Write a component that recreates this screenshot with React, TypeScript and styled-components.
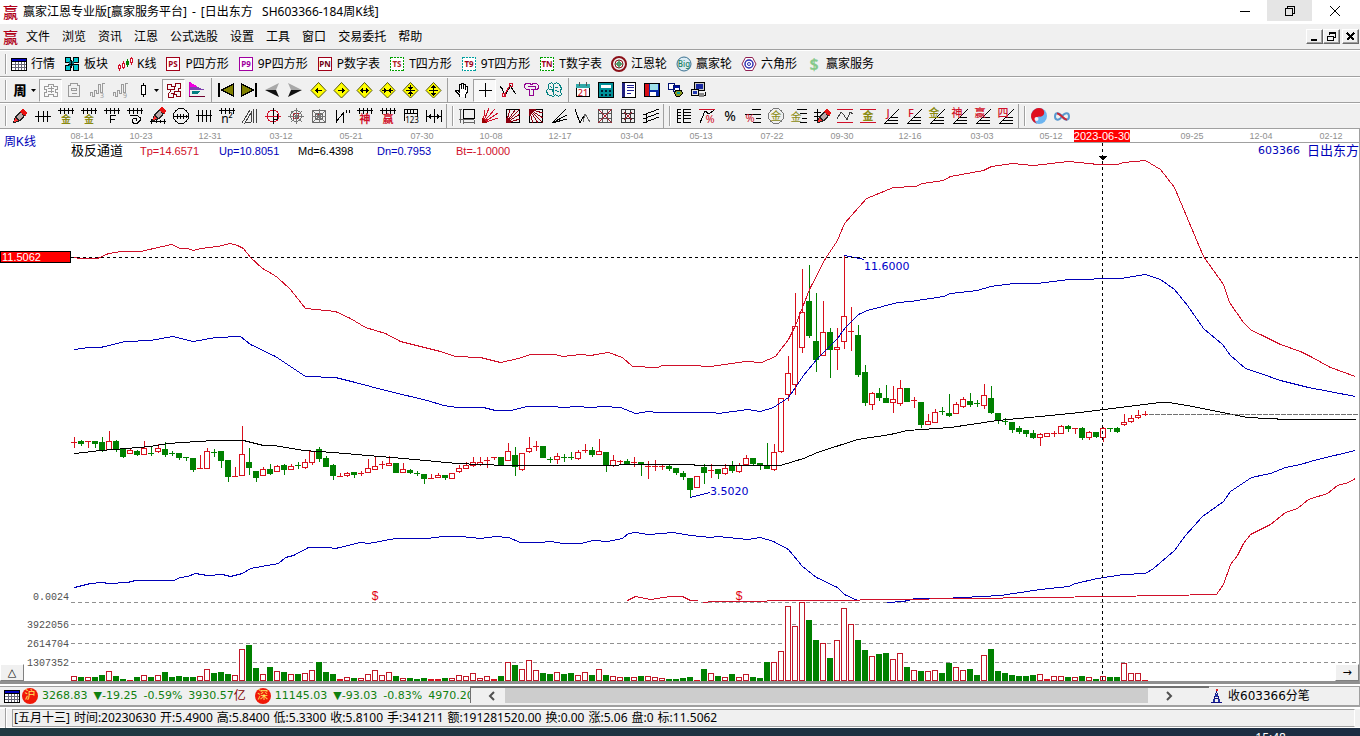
import React from 'react';
import styled, { createGlobalStyle } from 'styled-components';

const UI = '"Noto Sans", "Noto Sans CJK SC", sans-serif';
const WIDE = '"DejaVu Sans", "Noto Sans CJK SC", sans-serif';
const SLIM = '"Liberation Sans", "Noto Sans CJK SC", sans-serif';

const GlobalStyle = createGlobalStyle`
  * { box-sizing: border-box; }
  body { margin: 0; background: #fff; font: 12px/16px ${UI}; color: #000; }
  button { font: inherit; color: inherit; border: 0; padding: 0; background: none; }
`;

/* ---------- icon primitives ---------- */

type Shape = React.ReactElement;

const K = '#000';
const RED = '#d0102a';
const MAROON = '#8b0010';
const OLIVE = '#8a8a10';
const GRAY = '#9a9a9a';
const TEAL = '#008080';

const p = (d: string, stroke = K, fill = 'none', width = 1): Shape => (
  <path d={d} stroke={stroke} fill={fill} strokeWidth={width} />
);
const f = (d: string, fill = K): Shape => <path d={d} fill={fill} />;
const t = (text: string, x: number, y: number, size: number, fill = K, weight = 400): Shape => (
  <text x={x} y={y} fontSize={size} fill={fill} fontWeight={weight} textAnchor="middle" fontFamily={UI}>{text}</text>
);

const Drawing = styled.svg`
  flex: none;
  overflow: visible;
`;

const Glyph = ({ shapes, size = 18, smooth }: { shapes: Shape[]; size?: number; smooth?: boolean }) => (
  <Drawing width={size} height={size} viewBox={`0 0 ${size} ${size}`} shapeRendering={smooth ? 'auto' : 'crispEdges'} aria-hidden="true">
    {shapes.map((shape, i) => <React.Fragment key={i}>{shape}</React.Fragment>)}
  </Drawing>
);

const grille = 'M1 3.500h16M3.500 1v6M7.500 1v6M11.500 1v6M15.500 1v6';
const diamond = (arrow: string): Shape[] => [
  <path d="M9.500 1.500L17 9.500L9.500 17L2 9.500z" fill="#ffff00" stroke="#55550a" shapeRendering="auto" />, p(arrow),
];
const pencil = (dx: number, dy: number): Shape => (
  <g transform={`translate(${dx} ${dy})`}>
    {f('M0 14L2 7L8 1L13 5L9 11L5 13z', '#222')}
    {f('M7 2L10 0L14 3L13 7L10 6z', '#e81010')}
    {f('M4 8L8 3L10 7L6 11z', '#b9a9a9')}
    {f('M2 9L5 12L1 13z', '#ff3030')}
  </g>
);
const slopes = (mark: string, color: string): Shape[] => [
  p('M2 17L17 2M6 13.500H16M3 16.500H16M9 10.500H16'),
  t(mark, 6, 10, 11, color, 500),
];

/* ---------- icon sets ---------- */

const tableIcon = [
  f('M0 2h16v13H0z', '#000'), f('M1 3h14v2H1z', '#0000c0'), f('M1 6h14v8H1z', '#fff'),
  p('M1 8.500h14M1 11.500h14M4.500 6v8M7.500 6v8M10.500 6v8M13.500 6v8', '#667'),
];

const boxIcon = (label: string, color: string, text: string, dashed?: boolean) => [
  <rect x="1.500" y="1.500" width="13" height="13" fill="#fff" stroke={color} strokeDasharray={dashed ? '2 1' : undefined} />,
  t(label, 8, 11, 8, text, 700),
];

const modules: [string, Shape[], boolean?][] = [
  ['行情', tableIcon],
  ['板块', [
    f('M1 1h6v6H1zM9 1h6v5H9zM1 9h5v6H1zM9 8h6v7H9z', '#00c8d0'), p('M1.500 1.500h5v5h-5zM9.500 1.500h5v5h-5zM1.500 9.500h5v5h-5zM9.500 8.500h5v6h-5z'),
    f('M5 5h5v5H5z', '#006c78'), p('M7.500 4v8M4 8.500h8'),
  ]],
  ['K线', [
    p('M2.500 8v7M6.500 5v8M14.500 1v8', RED), p('M1.500 9.500h2v3h-2zM5.500 7.500h2v4h-2zM13.500 2.500h2v4h-2z', RED, '#fff'),
    p('M10.500 3v8M9.500 5.500h2v3h-2z', '#008000', '#008000'),
  ]],
  ['P四方形', boxIcon('PS', '#a00018', '#a00018')],
  ['9P四方形', boxIcon('P9', '#a000a0', '#a000a0')],
  ['P数字表', boxIcon('PN', '#a00018', '#700010')],
  ['T四方形', boxIcon('TS', '#00a000', '#b02020', true)],
  ['9T四方形', boxIcon('T9', '#00a0a0', '#a00018', true)],
  ['T数字表', boxIcon('TN', '#00a000', '#a00018', true)],
  ['江恩轮', [
    <circle cx="8" cy="8" r="7" fill="none" stroke="#8b1018" strokeWidth="2" />,
    <circle cx="8" cy="8" r="4" fill="#fff" stroke="#8b1018" />,
    <circle cx="8" cy="8" r="2" fill="none" stroke="#208040" />, p('M8 4v8M4 8h8', '#208040'),
  ], true],
  ['赢家轮', [
    <circle cx="8" cy="8" r="7" fill="#dcecf4" stroke="#3a7090" />, t('Big', 8, 11, 8, '#208060', 500),
  ], true],
  ['六角形', [
    p('M4.500 1.500h7L15 8l-3.500 6.500h-7L1 8z', '#902050', '#fff', 1), <circle cx="8" cy="8" r="4" fill="none" stroke="#3030b0" strokeWidth="1.500" />,
    <circle cx="8" cy="8" r="1.500" fill="none" stroke="#3030b0" />,
  ], true],
  ['赢家服务', [t('$', 8, 14, 16, '#86c98c', 700)], true],
];

const wave = (mark: string) => [p('M2.500 15v-4h2v4h2v-6h2v3h2V3h2v8h2V2h2', GRAY), t(mark, 14, 17, 7, GRAY)];
const knot = (c: string) => [p('M2.500 3.500h4v2h4v-3h5v5h-2v3h2v5h-4v-2h-3v3h-5v-4l2-2v-2h-3zM6 8.500h3v-3M9 13v-3h4M5.500 12.500h3', c)];

type Tool = { name: string; shapes: Shape[]; down?: boolean; drop?: boolean; smooth?: boolean };

const viewTools: (Tool | '|')[] = [
  { name: '周期', drop: true, smooth: true, shapes: [t('周', 9, 14, 13, K, 900)] },
  { name: '云图', down: true, shapes: [p('M2.500 5h4v-2h5v2h4v3h-2v3h2v4h-4v-2h-5v2h-4v-4h2v-3h-2zM6 7.500h6M6 10.500h6M9.500 5v7', GRAY)] },
  { name: '剪贴', shapes: [p('M3.500 4.500h2v-2h7v2h2v11h-11zM6.500 7.500h5v2h-5zM6.500 12.500h5', GRAY)] },
  { name: '三浪', shapes: wave('3') },
  { name: '九浪', shapes: wave('9') },
  { name: 'K线样式', drop: true, shapes: [p('M9.500 2v14'), p('M7.500 4.500h4v9h-4z', K, '#fff')] },
  { name: '缠绕', down: true, shapes: knot(MAROON) },
  { name: '旗形', shapes: [f('M2 1L10 6L2 7z', '#f000e0'), f('M2 6L10 6L17 9L2 9z', '#8040b0'), f('M4 10L12 10L9 13H4z', '#008080'), p('M1.500 1v15', '#d000c0'), p('M1 15.500h16', '#700030')] },
  '|',
  { name: '最前', shapes: [p('M2 2v14', K, 'none', 2), p('M4.500 9L16.500 3v12z', K, '#808000')] },
  { name: '最后', shapes: [p('M16 2v14', K, 'none', 2), p('M13.500 9L1.500 3v12z', K, '#808000')] },
  { name: '向左', smooth: true, shapes: [f('M2 9L16 2L13 9z', '#a8a8a8'), f('M2 9h11l3 7z', '#101010')] },
  { name: '向右', smooth: true, shapes: [f('M16 9L2 2L5 9z', '#a8a8a8'), f('M16 9H5L2 16z', '#101010')] },
  { name: '左移', shapes: diamond('M6 9.500h7M7.500 8v3M8.500 7v5') },
  { name: '右移', shapes: diamond('M6 9.500h7M11.500 8v3M10.500 7v5') },
  { name: '横向放大', shapes: diamond('M5 9.500h9M6.500 8v3M7.500 7v5M12.500 8v3M11.500 7v5') },
  { name: '横向缩小', shapes: diamond('M4 9.500h11M7.500 8v3M6.500 7v5M11.500 8v3M12.500 7v5') },
  { name: '纵向缩小', shapes: diamond('M9.500 4v11M5 9.500h9M8 7.500h3M7 6.500h5M8 11.500h3M7 12.500h5') },
  { name: '纵向放大', shapes: diamond('M9.500 4v11M5 9.500h9M8 5.500h3M7 6.500h5M8 13.500h3M7 12.500h5') },
  '|',
  { name: '手形', shapes: [p('M6.500 16v-2l-4-4v-1h2l2 2V3.500h1.500V8V2.500h2V8V3.500h2V9V5.500h2v6l-2 3v2', K, '#fff')] },
  { name: '十字光标', down: true, shapes: [p('M9.500 2v14M3 9.500h13')] },
  { name: '折点', shapes: [p('M1 5.500l2 2l3 7L11.500 5l5 8', K), p('M5 15L11 4', RED), p('M3.500 12.500h3v3h-3zM10.500 2.500h3v3h-3z', RED)] },
  { name: '组织', shapes: [p('M2.500 3.500l2-1h3l2 1l2-1h3l2 2v3l-2 1h-3v6h-4v-6h-3l-2-2zM6 5.500h7v3H9', '#900090')] },
  { name: '模型', shapes: [p('M3.500 3.500l3-2l2 2l3-2l3 2l2 4l-1 2l1 4l-3 2l-3-2l-2 2l-3-1l-3-1l-1-4l2-2zM8.500 3v11M4 8h3l1 3M10 6h3M10 9l4 2M5 5l2 2', TEAL)] },
  '|',
  { name: '日历', shapes: [p('M2.500 3.500h13v12h-13z', K, '#fff'), f('M2 3h14v4H2z', '#30a8a8'), p('M5.500 1v4M12.500 1v4', '#555'), t('21', 9, 15, 9, RED, 500)] },
  { name: '计算器', shapes: [p('M1.500 1.500h15v15h-15z', K, '#009098'), f('M4 4h10v3H4z', '#fff'), f('M4 9h2v2H4zM8 9h2v2H8zM12 9h2v2h-2zM4 13h2v2H4zM8 13h2v2H8zM12 13h2v2h-2z', '#001c30')] },
  { name: '笔记', shapes: [p('M2.500 1.500h13v15h-13z', K, '#fff'), f('M2 2h3v14H2z', '#202080'), p('M7 4.500h7M7 6.500h7M7 9.500h7M7 12.500h4', '#202090')] },
  { name: '保存', shapes: [p('M1.500 2.500h15v13h-15z', K, '#0828a8'), f('M2 3h4v12H2z', '#d81018'), f('M7 3h8v6H7z', '#9fe0e8'), f('M7 11h6v4H7z', '#fff')] },
  { name: '导出', shapes: [p('M2.500 2.500h6v6h-6zM7.500 4.500h6v6h-6z', '#001070', '#fff'), f('M8 5h5v2H8z', '#0010a0'), p('M9.500 9.500h6l1 3l-3 3h-3l-2-3z', K, '#8a9a20'), f('M11 11h3v2h-3z', '#00a0a0')] },
  { name: '联机', shapes: [p('M5.500 1.500h10v8h-10z', K, '#c8c8c8'), f('M7 3h7v5H7z', '#1828a0'), p('M2.500 8.500h7v6h-7z', K, '#e8e8e8'), f('M4 10h4v3H4z', '#2038b0'), p('M8 14.500h8v-4', K), f('M10 12h5v4h-5z', '#888')] },
];

const square = 'M2.500 2.500h13v13h-13z';
const drawTools: Tool[][] = [
  [
    { name: '画笔', shapes: [pencil(2, 2)] },
    { name: '平行竖线', shapes: [p('M1 9.500h16M4.500 4v11M9.500 4v11M13.500 4v11')] },
    { name: '金线一', shapes: [p(grille), t('金', 9, 16, 10, OLIVE, 700)] },
    { name: '金线二', shapes: [p(grille), t('金', 9, 16, 10, OLIVE, 700)] },
    { name: 'F线', shapes: [p(grille), p('M7.500 8v8M7 8.500h6M7 12.500h5')] },
    { name: '螺旋', shapes: [p(grille), p('M4 8.500h7l3 2v3l-3 3H8l-2-2v-2l2-1h2v2')] },
    { name: '标尺笔', shapes: [pencil(3, 0), p('M1 14.500h16M2.500 12v5M7.500 13v3M11.500 13v3M15.500 12v5')] },
    { name: '圆周', shapes: [<circle cx="9" cy="9" r="7.500" fill="none" stroke={K} />, p('M1 9.500h16M5.500 7v5M8.500 7v5M11.500 7v5M14.500 8v3')] },
    { name: '竖线组', shapes: [p('M1 8.500h16M3.500 3v12M7.500 3v12M11.500 3v12M15.500 3v12')] },
    { name: '平方', shapes: [p(grille), t('n²', 9, 16, 12)] },
    { name: '斜线角', shapes: [p('M1 16L9 3M4 16L10 6v9zM12.500 2v14M15.500 2v14', '#444')] },
    { name: '红十字圆', shapes: [<circle cx="9" cy="9" r="6" fill="none" stroke={RED} />, p('M9.500 1v16', K), p('M1 9.500h16', RED), p('M9 12h4v-5', K)] },
    { name: '圆网', shapes: [<circle cx="9" cy="9" r="5.500" fill="none" stroke="#777" />, <circle cx="9" cy="9" r="3" fill="none" stroke="#b02030" />, p('M9.500 1v16M1 9.500h16M4 4l11 11M4 15L15 4', '#777')] },
    { name: '方网', shapes: [p('M2.500 3.500h13v12h-13zM5.500 6.500h7v6h-7z', '#666'), p('M7.500 7.500h3v3h-3z', '#b02030'), p('M2 3l14 13M2 16L16 3M9.500 2v14M2 9.500h14', '#777')] },
    { name: '折线', shapes: [p('M3.500 3v13M3 15L11 5M10.500 5v11M13.500 3v3M16.500 3v3')] },
    { name: '神线', shapes: [p(grille), t('神', 9, 16, 11, RED, 700)] },
    { name: '赢线', shapes: [p(grille), t('赢', 9, 16, 11, RED, 700)] },
    { name: '数字线', shapes: [p('M2 2.500h14M2.500 2v12M15.500 2v8M2 6.500h14M5.500 2v5M8.500 2v5M11.500 2v5'), t('123', 10, 16, 8)] },
    { name: '间距', shapes: [p('M1.500 3v12M16.500 3v12M9.500 2v14M2 9.500h14M4.500 8v3M5.500 7v5M13.500 8v3M12.500 7v5')] },
  ],
  [
    { name: '方框测量', shapes: [p('M5.500 2.500h11v9h-11z'), p('M2.500 2v14M1 2.500h3M1 12.500h15M5.500 13v4M16.500 13v4M5 15.500h12', '#666')] },
    { name: '扇形线', shapes: [p('M2 16L8 1M2 16L14 2M2 16L17 6M2 16L17 11M2 16L4 3', RED), f('M1 11l5 5H1z', '#900')] },
    { name: '方扇形', shapes: [p(square), p('M2 16L6 3M2 16L11 3M2 16L16 2M2 16L16 7M2 16L16 12', MAROON), f('M2 11l5 5H2z', MAROON)] },
    { name: '反扇形', shapes: [p(square), p('M2 2L16 6M2 2L16 11M2 2L16 16M2 2L11 16M2 2L6 16', MAROON), f('M2 2h7L2 10z', MAROON)] },
    { name: '角度线', shapes: [p('M2 16L16 2M2 16L17 8M2 16L17 12')] },
    { name: '波谷', shapes: [p('M2 2L7 16L12 7'), p('M10 15L12 7L17 15', '#666')] },
    { name: '方格一', shapes: [p('M2.500 2.500h13v13h-13zM6.500 2v14M11.500 2v14M2 6.500h14M2 11.500h14', '#555'), p('M2 2l14 14M2 16L16 2', '#b02030')] },
    { name: '方格二', shapes: [p('M2.500 2.500h13v13h-13zM6.500 2v14M11.500 2v14M2 6.500h14M2 11.500h14', '#333'), p('M5 5l8 8M5 13l8-8', '#b02030')] },
    { name: '平行斜线', shapes: [p('M1 8L17 2M1 12L17 6M1 16L17 10M4.500 7v9')] },
  ],
  [
    { name: '刻度表', shapes: [p('M2.500 2v14M8.500 2v14M2 2.500h4M2 5.500h4M2 8.500h4M2 11.500h4M2 15.500h4M8 2.500h8M8 5.500h8M8 8.500h8M8 11.500h8M8 15.500h8')] },
    { name: '百分比折线', shapes: [p('M1 2.500h16', RED), p('M2 16L7 4l4 3l5-4'), t('%', 12, 16, 11, RED)] },
    { name: '百分比', smooth: true, shapes: [t('%', 9, 14, 14)] },
    { name: '百分比线', shapes: [p('M8 2.500h9M1 7.500h16M12 11.500h5M9 15.500h8'), t('%', 6, 15, 11, RED)] },
    { name: '金圆', shapes: [<circle cx="9" cy="9" r="7.500" fill="none" stroke="#777" />, t('金', 9, 13, 11, OLIVE)] },
    { name: '金分线', shapes: [p('M7 2.500h10M10 6.500h7M12 11.500h5M10 15.500h7'), t('金', 6, 14, 11, OLIVE)] },
    { name: '刻度笔', shapes: [p('M4.500 2v14M1 5.500h7M1 9.500h7M1 13.500h7'), pencil(4, 2)] },
    { name: '波浪', shapes: [p('M1 2.500h16M1 15.500h16', RED), p('M1 12L5 5l3 3l3 5l3-8l3 2', '#444')] },
    { name: '金通道', shapes: [p('M1 2.500h16M1 15.500h16', RED), t('金', 9, 13, 11, OLIVE, 700)] },
    { name: 'J斜线', shapes: slopes('J', RED) },
    { name: 'F斜线', shapes: slopes('F', RED) },
    { name: '金斜线', shapes: slopes('金', OLIVE) },
    { name: '神斜线', shapes: slopes('神', RED) },
    { name: '赢斜线', shapes: slopes('赢', RED) },
    { name: '四斜线', shapes: slopes('四', RED) },
  ],
  [
    { name: '太极', smooth: true, shapes: [
      <circle cx="9" cy="9" r="8" fill="#6cb4f0" />, f('M11 1.300A8 8 0 1 0 7 16.800A4 4 0 0 1 9 9.500A4 4 0 0 0 11 1.300z', '#e01020'),
      <circle cx="11" cy="6" r="2.500" fill="#e01020" />, <circle cx="6.500" cy="12" r="2" fill="#f4f0f8" />,
    ] },
    { name: '无穷', smooth: true, shapes: [p('M9 9.500C6 5 2 5.500 2 9.500S6 14 9 9.500', '#5a9ad0', 'none', 2), p('M9 9.500C12 5 16 5.500 16 9.500S12 14 9 9.500', '#5a9ad0', 'none', 2), p('M4 6.500C7 6 11 13 14 12.500', '#c82838', 'none', 2)] },
  ],
];

/* ---------- shell ---------- */

const Page = styled.div`
  display: flex;
  flex-direction: column;
  background: #f0f0f0;
`;

const TitleBar = styled.header`
  display: flex;
  align-items: center;
  height: 24px;
  background: #fff;
  padding: 0 3px;
`;

const Title = styled.h1`
  display: flex;
  gap: 5px;
  margin: 0;
  padding-left: 4px;
  flex: 1;
  font-size: 12px;
  font-weight: 400;
  white-space: pre;
`;

const Logo = styled.span`
  width: 16px;
  color: #b00018;
  font-size: 15px;
  font-weight: 500;
`;

const WindowButton = styled.button<{ $hot?: boolean }>`
  align-self: flex-start;
  width: 45px;
  height: 21px;
  display: grid;
  place-items: center;
  background: ${(q) => (q.$hot ? '#e5e5e5' : 'transparent')};
`;

const MenuBar = styled.nav`
  display: flex;
  align-items: center;
  height: 26px;
  padding: 0 1px 0 3px;
  border-bottom: 1px solid #a0a0a0;
`;

const MenuItem = styled.button`
  padding: 0 6px;
  white-space: nowrap;
`;

const MenuList = styled.div`
  display: flex;
  flex: 1;
  margin-left: 1px;
`;

const ChildButton = styled.button<{ $apart?: boolean }>`
  width: 17px;
  height: 15px;
  margin-left: ${(q) => (q.$apart ? 2 : 0)}px;
  display: grid;
  place-items: center;
  border: 1px solid;
  border-color: #fff #696969 #696969 #fff;
  box-shadow: inset -1px -1px #a0a0a0;
`;

const Bar = styled.div<{ $tall?: boolean }>`
  display: flex;
  height: ${(q) => (q.$tall ? 27 : 26)}px;
  border-top: 1px solid #fff;
  border-bottom: 1px solid #a0a0a0;
`;

const Group = styled.div<{ $open?: boolean }>`
  display: flex;
  align-items: center;
  padding: 0 1px 0 5px;
  border-right: 1px solid ${(q) => (q.$open ? 'transparent' : '#a0a0a0')};
`;

const Grip = styled.span`
  flex: none;
  width: 2px;
  height: 20px;
  margin-right: 1px;
  border-left: 1px solid #a0a0a0;
  border-right: 1px solid #fff;
`;

const Divider = styled.span`
  width: 6px;
  height: 24px;
  display: flex;
  justify-content: center;
  &::before { content: ''; width: 1px; background: #a0a0a0; }
`;

const ModuleButton = styled.button`
  display: flex;
  align-items: center;
  gap: 4px;
  margin-right: 9px;
  white-space: nowrap;
`;

const Modules = styled.div`
  display: flex;
  padding-left: 3px;
`;

const ToolButton = styled.button<{ $down?: boolean; $drop?: boolean }>`
  display: flex;
  align-items: center;
  justify-content: center;
  gap: 2px;
  width: ${(q) => (q.$drop ? 31 : 23)}px;
  height: 23px;
  border: 1px solid transparent;
  ${(q) => q.$down && 'border-color: #a0a0a0 #fff #fff #a0a0a0; background: #f8f8f8;'}
`;

const ToolView = ({ tool }: { tool: Tool }) => (
  <ToolButton $down={tool.down} $drop={tool.drop} aria-label={tool.name} aria-pressed={tool.down}>
    <Glyph shapes={tool.shapes} smooth={tool.smooth} />
    {tool.drop && <svg width="5" height="3" viewBox="0 0 5 3" aria-hidden="true"><path d="M0 0h5L2.500 3z" /></svg>}
  </ToolButton>
);

/* ---------- chart data ---------- */

// One entry per week: up/down, high, body top, body bottom, low, volume top.
const weeks = `r437,442,442,448,676 g440,441,443,445,677 r441,441,442,448,677 g441,441,443,447,677 g437,442,449,451,675
r431,441,449,449,671 g440,441,448,451,676 g448,448,456,457,679 r449,450,453,454,680 g450,451,454,455,677
r441,448,454,454,675 g447,453,454,455,677 r444,448,451,453,675 g442,449,454,456,672 g451,453,454,455,677
g453,453,457,459,676 g457,457,458,460,677 g458,458,469,471,677 r455,468,469,469,676 r448,451,468,469,669
g449,452,453,456,673 g451,451,460,467,672 g460,460,476,481,674 r467,476,477,477,675 r426,454,475,476,649
g448,462,467,474,645 g471,471,477,481,668 r467,469,475,476,674 g464,469,473,474,667 r465,466,471,472,671
g464,465,469,474,672 r464,466,469,470,674 g462,465,466,468,674 r459,462,467,469,673 r451,451,462,465,670
g447,449,458,461,662 g456,458,466,466,672 g464,465,475,479,674 r473,476,477,477,679 r472,473,475,477,677
g472,472,474,477,678 r471,473,474,476,678 r459,468,472,473,674 r456,466,469,470,670 r461,464,465,469,675
r456,463,465,466,672 g463,463,472,472,676 r463,469,472,473,678 g469,470,472,473,678 g471,473,474,475,679
g474,474,478,483,678 r474,478,479,479,679 r473,475,477,478,679 g475,475,477,479,678 r473,473,478,478,678
r465,468,471,473,675 r462,465,468,469,676 r457,462,465,467,673 r457,462,464,466,678 r457,460,461,468,676
r457,457,458,460,679 g457,457,465,465,676 r443,451,460,461,662 g447,455,466,475,665 r453,453,469,471,669
r437,448,451,453,660 r441,446,447,451,670 g446,446,457,457,673 g457,459,460,462,674 r453,456,459,464,672
g454,457,458,461,674 g452,457,458,459,673 r450,452,458,460,675 r444,450,451,453,672 g447,450,454,456,675
r439,451,454,455,669 g452,452,465,471,675 r455,460,465,467,676 r460,461,462,464,677 g459,461,463,464,677
r457,462,463,467,677 g462,462,464,475,676 r461,466,467,479,676 r460,466,467,471,677 r465,466,467,470,678
g465,466,468,470,679 g468,468,472,474,679 g471,473,476,479,678 g478,478,489,497,677 r476,476,487,488,680
g464,467,472,483,669 r464,470,471,478,673 g469,469,473,478,676 r464,468,473,475,677 g461,465,470,472,674
r463,465,471,473,677 r455,458,464,464,674 g458,458,463,464,677 g463,463,465,469,678 g443,466,468,468,662
r444,452,469,471,662 r398,398,451,453,651 r356,373,394,401,606 r293,326,384,395,626 r269,312,347,353,602
g265,301,335,337,620 g293,341,359,371,640 r301,332,355,356,643 g328,332,349,377,658 r328,347,349,370,640
r255,316,341,349,608 r307,331,332,351,624 g325,335,374,376,640 g365,372,402,405,650 r392,393,404,410,656
g388,393,397,400,654 g385,398,402,402,653 r386,399,402,413,659 r380,388,403,406,653 g388,388,401,401,667
r397,400,401,408,670 g402,402,424,427,671 r414,421,424,424,671 r409,412,422,422,670 g407,411,412,414,673
g394,413,415,416,663 r402,404,413,413,667 r397,399,406,408,670 g393,401,404,406,669 g400,403,404,406,675
r384,395,405,409,655 g386,398,412,413,649 g413,413,420,423,671 g418,421,422,424,673 g422,422,429,432,675
g426,428,431,433,676 g430,430,433,436,676 g430,433,437,438,675 r433,434,437,446,674 r433,433,436,437,679
r431,433,434,437,676 r425,426,433,433,676 g425,426,428,431,677 r428,428,429,434,677 g427,428,437,439,676
r431,432,437,440,677 g432,432,436,437,679 r427,428,437,442,676 g428,428,429,431,677 g427,428,431,432,677
r414,422,424,426,663 r415,418,421,423,673 r410,415,417,419,673 r411,414,415,416,680`
  .split(/\s+/)
  .map((w) => ({ up: w[0] === 'r', v: w.slice(1).split(',').map(Number) }));

const CHART_FLOOR = 681;
const paths = { upWick: '', upBox: '', upVolume: '', downFill: '' };
weeks.forEach(({ up, v: [high, top, bottom, low, volume] }, i) => {
  const x = 74 + 7 * i;
  const flat = bottom - top <= 1;
  if (up) {
    paths.upWick += flat ? `M${x} ${high}h1V${low}h-1z` : `M${x} ${high}h1V${top}h-1zM${x} ${bottom}h1V${low}h-1z`;
    if (flat) paths.upWick += `M${x - 3} ${top}h6v1h-6z`;
    else paths.upBox += `M${x - 2.5} ${top + 0.5}h5V${bottom + 0.5}h-5z`;
    if (volume >= 679) paths.upWick += `M${x - 3} ${volume}h6V${CHART_FLOOR}h-6z`;
    else paths.upVolume += `M${x - 2.5} ${volume + 0.5}h5V${CHART_FLOOR - 0.5}h-5z`;
  } else {
    paths.downFill += `M${x} ${high}h1V${low + 1}h-1zM${x - 3} ${top}h6V${bottom + 1 - (flat ? 1 : 0)}h-6zM${x - 3} ${volume}h6V${CHART_FLOOR}h-6z`;
  }
});

const curves: [string, string][] = [
  [RED, '74,257 80,258 97,258 108,253 121,251 140,251 171,244 180,248 187,248 193,250 200,248 217,246 230,243 237,245 243,248 250,257 262,268 271,273 277,277 290,289 305,308 335,311 350,318 365,327 385,333 400,341 420,346 440,351 455,356 480,357 500,362 518,358 530,354 555,354 562,356 580,354 590,355 608,352 622,357 632,366 657,367 662,365 690,365 710,366 745,361 761,362 775,356 788,339 795,325 809,289 825,258 837,240 844,223 866,198 893,187 915,186 922,183 943,180 950,176 983,170 991,166 1012,163 1033,165 1068,161 1098,164 1117,164 1123,162 1145,160 1160,169 1174,187 1203,256 1223,284 1229,302 1243,322 1251,330 1260,334 1280,344 1300,351 1310,356 1330,367 1355,376'],
  ['#0000b8', '74,349 88,347 100,347 125,341 150,340 172,336 193,341 215,337 240,336 250,344 275,356 305,376 335,377 355,382 385,390 410,396 427,400 443,405 457,407 483,407 495,410 510,410 527,406 553,406 562,407 577,406 590,407 603,406 620,407 635,413 648,411 657,412 713,412 718,413 747,409 760,411 773,407 788,397 795,387 803,375 817,358 837,338 845,327 858,314 867,310 897,302 910,301 943,296 950,293 977,290 990,286 1013,283 1037,283 1068,279 1120,278 1145,274 1160,279 1174,289 1187,305 1203,328 1222,344 1230,355 1245,368 1260,373 1280,380 1308,387 1355,396'],
  ['#000', '74,453 83,452 100,450 113,449 150,446 167,443 213,440 243,440 263,445 273,445 303,450 333,452 367,455 403,458 457,463 480,464 507,465 617,465 620,464 693,464 695,465 780,465 803,458 817,452 857,439 890,434 907,430 950,427 997,420 1050,415 1080,412 1103,409 1120,407 1160,402 1168,402 1187,405 1227,413 1247,417 1287,419 1355,419'],
  ['#0000b8', '74,587 90,583 102,582 108,583 127,582 135,580 173,580 180,577 187,576 195,573 207,575 222,574 230,576 242,573 250,568 278,563 285,557 293,555 308,547 327,547 335,548 360,542 368,543 395,538 427,538 443,536 460,536 480,538 495,536 508,537 520,542 540,542 550,541 563,543 580,543 593,540 607,541 622,538 628,533 635,532 648,534 673,532 690,535 710,537 718,536 747,539 760,537 773,541 788,549 802,566 816,577 837,587 844,594 857,600'],
  ['#0000b8', '887,602 903,601 915,598 943,598 1000,595 1040,589 1068,586 1075,583 1097,578 1123,574 1145,573 1153,568 1174,550 1185,535 1202,516 1223,501 1230,491 1251,477 1270,473 1285,467 1300,464 1317,459 1355,450'],
  [RED, '627,600 635,596 650,599 670,596 682,596 690,600 697,600'],
  [RED, '703,602 713,601 753,601 780,600 827,600 893,599 1040,597 1110,596 1216,594 1223,584 1230,564 1237,555 1243,543 1250,534 1270,524 1285,512 1297,508 1308,499 1327,493 1337,485 1348,482 1355,478'],
];

const dates: [number, string][] = [
  [82, '08-14'], [141, '10-23'], [210, '12-31'], [281, '03-12'], [351, '05-21'], [422, '07-30'], [491, '10-08'], [560, '12-17'],
  [632, '03-04'], [701, '05-13'], [772, '07-22'], [842, '09-30'], [910, '12-16'], [982, '03-03'], [1051, '05-12'], [1192, '09-25'],
  [1261, '12-04'], [1331, '02-12'],
];

const scale: [number, string][] = [[600, '0.0024'], [628, '3922056'], [647, '2614704'], [666, '1307352']];

/* ---------- chart ---------- */

const ChartFrame = styled.main`
  position: relative;
  background: #fff;
  border-right: 1px solid #a0a0a0;
  border-bottom: 3px solid #909090;
`;

const Plot = styled.svg`
  display: block;
  width: 100%;
  height: auto;
  shape-rendering: crispEdges;
`;

const PeriodLabel = styled.span`
  position: absolute;
  left: 4px;
  top: 5px;
  color: #0000b8;
  font: 12px/16px ${SLIM};
`;

const Legend = styled.div`
  position: absolute;
  left: 71px;
  right: 0;
  top: 14px;
  display: flex;
  align-items: center;
  font: 11px/16px ${SLIM};
  white-space: nowrap;
`;

const Reading = styled.span<{ $color?: string; $w: number }>`
  width: ${(q) => q.$w}px;
  color: ${(q) => q.$color ?? '#000'};
`;

const Indicator = styled(Reading)`
  font-size: 13px;
`;

const Security = styled.span`
  display: flex;
  gap: 7px;
  margin-left: auto;
  color: #0000b8;
  font: 11px/16px ${WIDE};
`;

const SecurityName = styled.span`
  font-size: 13px;
`;

const CornerButton = styled.button<{ $right?: boolean }>`
  position: absolute;
  bottom: 0;
  ${(q) => (q.$right ? 'right: 0;' : 'left: 0;')}
  width: 24px;
  height: 17px;
  display: grid;
  place-items: center;
  background: #f0f0f0;
  border: 1px solid;
  border-color: #fff #808080 #808080 #fff;
  font: 11px/12px ${WIDE};
`;

const Chart = () => (
  <ChartFrame>
    <Plot viewBox="0 129 1359 552" role="img" aria-label="603366 周K线">
      <path d="M71 142.500H1359" stroke="#a0a0a0" />
      <g fontFamily={SLIM} fontSize="9" fill="#909090" textAnchor="middle">
        {dates.map(([x, label]) => <text key={label} x={x} y={139}>{label}</text>)}
      </g>
      <path d="M71 602.500H1359M71 624.500H1359M71 643.500H1359M71 662.500H1359" stroke="#909090" strokeDasharray="4 3" />
      <g fontFamily='"Liberation Mono", monospace' fontSize="10" fill="#505050" textAnchor="end">
        {scale.map(([y, label]) => <text key={label} x={69} y={y}>{label}</text>)}
      </g>
      <path d={paths.upBox} fill="#fff" stroke="#d8101c" />
      <path d={paths.upVolume} fill="#fff" stroke="#c01828" />
      <path d={paths.upWick} fill="#d8101c" />
      <path d={paths.downFill} fill="#008000" />
      <g transform="translate(0.5 0.5)" fill="none">
        {curves.map(([color, points], i) => <polyline key={i} points={points} stroke={color} />)}
      </g>
      <path d="M1149 414.500H1358" stroke="#707070" strokeDasharray="5 1" />
      <path d="M844.500 255.500L864 259.500M690.500 497.500L710 492.500" stroke="#0000b8" />
      <g fontFamily={WIDE} fontSize="11" fill="#0000c8">
        <text x="864" y="270">11.6000</text>
        <text x="710" y="495">3.5020</text>
      </g>
      <g fontFamily={SLIM} fontSize="12" fill="#e00010" textAnchor="middle">
        <text x="375" y="600">$</text>
        <text x="739" y="600">$</text>
      </g>
      <path d="M71 257.500H1359M1102.500 143V681" stroke="#000" strokeDasharray="3 3" />
      <path d="M1099 156h8l-4 5z" />
      <rect x="0.500" y="251.500" width="70" height="11" fill="#ff0000" stroke="#000" />
      <text x="2" y="261" fill="#fff" fontFamily={SLIM} fontSize="11">11.5062</text>
      <rect x="1074" y="130" width="56" height="12" fill="#ff0000" />
      <text x="1102" y="140" fill="#fff" fontFamily={SLIM} fontSize="11" textAnchor="middle">2023-06-30</text>
    </Plot>
    <PeriodLabel>周K线</PeriodLabel>
    <Legend>
      <Indicator $w={69}>极反通道</Indicator>
      <Reading $w={79} $color={RED}>Tp=14.6571</Reading>
      <Reading $w={79} $color="#0000b8">Up=10.8051</Reading>
      <Reading $w={79}>Md=6.4398</Reading>
      <Reading $w={79} $color="#0000b8">Dn=0.7953</Reading>
      <Reading $w={79} $color={RED}>Bt=-1.0000</Reading>
      <Security><span>603366</span><SecurityName>日出东方</SecurityName></Security>
    </Legend>
    <CornerButton aria-label="展开">△</CornerButton>
    <CornerButton $right aria-label="向右">→</CornerButton>
  </ChartFrame>
);

/* ---------- status area ---------- */

const StatusRow = styled.div`
  display: flex;
  height: 23px;
  border-top: 2px solid #fff;
  border-bottom: 2px solid #a0a0a0;
  box-shadow: inset 0 1px #a0a0a0;
`;

const Quotes = styled.div`
  display: flex;
  align-items: center;
  width: 470px;
  padding-left: 4px;
  overflow: hidden;
  white-space: nowrap;
  font: 11px/16px ${WIDE};
  color: #108010;
`;

const Figures = styled.span`
  display: flex;
  gap: 6px;
`;

const Market = styled.span`
  flex: none;
  display: grid;
  place-items: center;
  width: 16px;
  height: 16px;
  margin: 0 4px 0 2px;
  border-radius: 8px;
  background: #f01808;
  color: #ffe860;
  font-size: 11px;
`;

const Unit = styled.span`
  margin-right: 7px;
  color: #800000;
  font-size: 12px;
`;

const Scroller = styled.div`
  flex: 1;
  display: flex;
  margin: 0 0 2px;
  border-top: 2px solid #707070;
  border-left: 1px solid #707070;
`;

const ScrollArrow = styled.button<{ $w: number; $pad: number }>`
  width: ${(q) => q.$w}px;
  padding-left: ${(q) => q.$pad}px;
  display: flex;
  align-items: center;
`;

const Thumb = styled.div`
  flex: 1;
  background: #cdcdcd;
`;

const Feed = styled.div`
  display: flex;
  align-items: center;
  gap: 3px;
  width: 151px;
  border-right: 1px solid #a0a0a0;
  font: 12px/16px ${WIDE};
`;

const DetailRow = styled.footer`
  display: flex;
  align-items: center;
  height: 21px;
  padding: 0 5px;
  border-top: 2px solid #fff;
  border-bottom: 1px solid #fff;
`;

const Detail = styled.p`
  flex: 1;
  display: flex;
  gap: 4px;
  margin: 0 0 0 4px;
  padding-left: 1px;
  border: 1px solid #a0a0a0;
  border-right-color: #fff;
  white-space: nowrap;
`;

const Taskbar = styled.div`
  display: flex;
  justify-content: flex-end;
  height: 8px;
  padding-right: 74px;
  overflow: hidden;
  background: linear-gradient(90deg, #213a42, #1c2c42);
  color: #fff;
`;

const Clock = styled.time`
  padding-top: 2px;
  font-size: 12px;
`;

const details = [
  '[五月十三]', '时间:20230630', '开:5.4900', '高:5.8400', '低:5.3300', '收:5.8100', '手:341211', '额:191281520.00', '换:0.00', '涨:5.06',
  '盘:0', '标:11.5062',
];

export default function App() {
  return (
    <Page>
      <GlobalStyle />
      <TitleBar>
        <Logo aria-hidden="true">赢</Logo>
        <Title><span>赢家江恩专业版[赢家服务平台]</span><span>-</span><span>[日出东方   SH603366-184周K线]</span></Title>
        <WindowButton aria-label="最小化"><Glyph size={12} shapes={[p('M1 6.500h10')]} /></WindowButton>
        <WindowButton $hot aria-label="还原"><Glyph size={12} shapes={[p('M1.500 3.500h7v7h-7zM3.500 3V1.500h7v7H9')]} /></WindowButton>
        <WindowButton aria-label="关闭"><Glyph size={12} smooth shapes={[p('M1 1l10 10M11 1L1 11')]} /></WindowButton>
      </TitleBar>
      <MenuBar>
        <Logo aria-hidden="true">赢</Logo>
        <MenuList>
          {['文件', '浏览', '资讯', '江恩', '公式选股', '设置', '工具', '窗口', '交易委托', '帮助'].map((m) => <MenuItem key={m}>{m}</MenuItem>)}
        </MenuList>
        <ChildButton aria-label="最小化子窗口"><Glyph size={11} shapes={[f('M2 8h6v2H2z')]} /></ChildButton>
        <ChildButton aria-label="还原子窗口"><Glyph size={11} shapes={[p('M1.500 5.500h6v4h-6zM1 5h7M3.500 4V1.500h6v5H8M3 2h7')]} /></ChildButton>
        <ChildButton $apart aria-label="关闭子窗口"><Glyph size={11} shapes={[p('M2 2l7 7M9 2L2 9', K, 'none', 2)]} /></ChildButton>
      </MenuBar>
      <Bar $tall>
        <Group $open>
          <Grip />
          <Modules>
            {modules.map(([label, shapes, smooth]) => (
              <ModuleButton key={label}><Glyph size={16} shapes={shapes} smooth={smooth} />{label}</ModuleButton>
            ))}
          </Modules>
        </Group>
      </Bar>
      <Bar>
        <Group $open>
          <Grip />
          {viewTools.map((tool, i) => (tool === '|' ? <Divider key={i} /> : <ToolView key={tool.name} tool={tool} />))}
        </Group>
      </Bar>
      <Bar>
        {drawTools.map((group, i) => (
          <Group key={i} $open={i === drawTools.length - 1}>
            <Grip />
            {group.map((tool) => <ToolView key={tool.name} tool={tool} />)}
          </Group>
        ))}
      </Bar>
      <Chart />
      <StatusRow>
        <Quotes>
          <Glyph size={16} shapes={tableIcon} />
          <Market>沪</Market>
          <Figures><span>3268.83</span><span>▼-19.25</span><span>-0.59%</span><span>3930.57</span></Figures>
          <Unit>亿</Unit>
          <Market>深</Market>
          <Figures><span>11145.03</span><span>▼-93.03</span><span>-0.83%</span><span>4970.20</span></Figures>
        </Quotes>
        <Scroller>
          <ScrollArrow $w={34} $pad={17} aria-label="向左滚动"><Glyph size={8} smooth shapes={[p('M6 0L2 4l4 4', '#505050', 'none', 2)]} /></ScrollArrow>
          <Thumb />
          <ScrollArrow $w={61} $pad={17} aria-label="向右滚动"><Glyph size={8} smooth shapes={[p('M2 0l4 4l-4 4', '#505050', 'none', 2)]} /></ScrollArrow>
        </Scroller>
        <Feed>
          <Glyph size={16} shapes={[f('M7 1h2v2H7z', '#e02020'), p('M7.500 3L4.500 13M7.500 3L10.500 13M2 14.500h11M5 10.500h5M6 6.500h3', '#101080'), f('M6 6h3v3H6zM4 11h2v3H4zM9 11h2v3H9z', '#2030a0')]} />
          收603366分笔
        </Feed>
      </StatusRow>
      <DetailRow>
        <Grip />
        <Detail>{details.map((item) => <span key={item}>{item}</span>)}</Detail>
      </DetailRow>
      <Taskbar><Clock>15:48</Clock></Taskbar>
    </Page>
  );
}
